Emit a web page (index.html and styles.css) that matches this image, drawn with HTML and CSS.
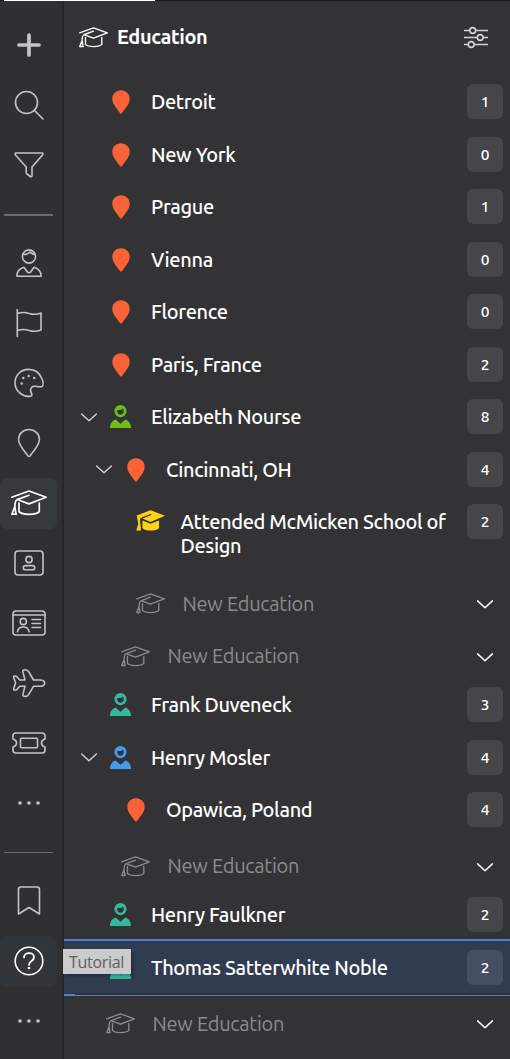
FILE: index.html
```html
<!DOCTYPE html>
<html lang="en">
<head>
<meta charset="utf-8">
<title>Education</title>
<link rel="stylesheet" href="styles.css">
</head>
<body>
<svg class="defs" aria-hidden="true">
  <symbol id="cap" viewBox="0 0 36 26"><path d="M.8 7.2 18 1l17.2 6.2L18 13.9 7.6 10M18 5.2 6.1 9.6Q3.9 11 3.8 17M8 13v8.6c3 3.6 17.2 3.6 20.3 0V13M3.8 16.8.9 24.2h4.2Z"/></symbol>
  <symbol id="cap-fill" viewBox="0 0 36 26"><path class="solid" d="M0 7.2 18 .3l18 6.9-18 7.6Z"/><path class="solid" d="m8 13 10 4 10.600-4v9.200c-3 4.400-17.500 4.400-20.600 0Z"/><path class="solid" d="M1 8h5.500c-2 3-1.600 5.500-1.100 8l.8 9.500H.3L2.900 17Z"/><path class="cut" d="M18.500 5.600 8 9.700Q6.300 11 6.300 15"/></symbol>
  <symbol id="pin-fill" viewBox="0 0 18 24"><path class="solid" d="M9 .3C4 .3.3 4 .3 8.700.3 14 5 18.800 8 23q1 1.300 2 0c3-4.200 7.700-9 7.700-14.300C17.700 4 14 .3 9 .3Z"/></symbol>
  <symbol id="person-fill" viewBox="0 0 21 23"><path class="solid" fill-rule="evenodd" d="M10.500 0a6.100 6.100 0 1 0 0 12.200 6.100 6.100 0 0 0 0-12.200Zm2.400 3.500.6 1c.8 2.900-.6 5.200-3 5.200-2.500 0-3.900-2.400-3-4.900 2.300.6 3.900.2 5.400-1.300Z"/><path class="solid" d="M0 23c0-4.800 2.200-7.300 5.700-8.500l4.800 4.300 4.800-4.300C18.800 15.700 21 18.200 21 23Z"/></symbol>
  <symbol id="down" viewBox="0 0 16 9"><path d="m.6.9 7.400 6.800L15.400.9"/></symbol>
</svg>
<div class="top-strip"><div class="top-progress"></div></div>
<div class="app">
  <nav class="rail">
    <div class="tools">
      <span class="tool"><svg class="plus" width="24" height="24"><path d="M12 2v20M2 12h20"/></svg></span>
      <span class="tool"><svg width="30" height="30"><circle cx="12.500" cy="12.500" r="11"/><path d="m20.500 20.500 8.500 8.500"/></svg></span>
      <span class="tool"><svg width="30" height="28"><path d="M1.500 2h27q.8 1-.2 2.200L18 16v8.500q0 1.800-1.700 1L13 23q-.8-.5-.8-1.500V16L1.700 4.200Q.7 2.800 1.500 2Z"/></svg></span>
    </div>
    <hr class="rule thick">
    <div class="tools kinds">
      <span class="tool"><svg width="26" height="30"><circle cx="13" cy="8.500" r="6.600"/><path d="M7 6q3.500 1.500 7-1.800Q16.500 6.500 19 6.500M.9 28.200c0-5.300 2.800-7.700 7-8.900l3.300 4.500q1.800 1.600 3.600 0l3.300-4.500c4.200 1.200 7 3.600 7 8.900Z"/></svg></span>
      <span class="tool"><svg width="26" height="28"><path d="M1.300 0v28M1.300 4.500c5-1.500 7.500-1.500 12 0 4 1.200 7.500 1.300 11.700-.6v17c-4.200 1.900-7.700 1.800-11.700.6-4.500-1.500-7-1.500-12 0"/></svg></span>
      <span class="tool"><svg width="30" height="30"><path d="M17.800 19.200c2.200-2.500 7.200.5 10.300-.8 1.200-1.200 1-4.900 0-7.400C25.800 5.200 20.800 1.400 14.500 1.400A13.300 13.300 0 0 0 1 14.800c0 8 7.200 14.600 15.600 13.400 1.500-.3 1.700-1.700.8-3.200-1-1.800-1.200-4 .4-5.800Z"/><g class="dots"><circle cx="7.700" cy="15.400" r="1.250"/><circle cx="9.300" cy="9.900" r="1.250"/><circle cx="14.700" cy="8" r="1.250"/><circle cx="20.200" cy="9.900" r="1.250"/></g></svg></span>
      <span class="tool"><svg width="24" height="30"><path d="M12 1.500C6.200 1.500 1.600 5.700 1.600 11.300 1.600 17.500 7.500 23 11 28q1 1 2 0c3.500-5 9.400-10.500 9.400-16.700 0-5.600-4.600-9.800-10.400-9.800Z"/></svg></span>
      <span class="tool active"><svg width="36" height="26"><use href="#cap"/></svg></span>
      <span class="tool"><svg width="30" height="26"><rect x="1" y="1" width="28" height="24" rx="3"/><circle cx="15" cy="9.500" r="3.100"/><rect x="9.300" y="15.600" width="11.400" height="4.200" rx="2.100"/></svg></span>
      <span class="tool"><svg width="34" height="26"><rect x="1" y="1" width="32" height="24" rx="3"/><path d="M1 5h32M5.500 21.800q.8-4.800 5.800-4.800t5.800 4.800M20 9.500h8.500M20 13.500h8.500M20 17.500h8.500"/><circle cx="11.300" cy="11.500" r="3.100"/></svg></span>
      <span class="tool"><svg width="34" height="30"><path d="M28.700 12c5.300.8 5.300 5.500 0 6.300H21.500l-4.600 7.800q-1.400 2.300-3.200 2.300c-2.800 0-3.300-.8-2.700-2.500l2-7.600H7.700l-3 3.500q-3.500 1.200-3-1.200l1.900-5.500-1.900-5.500q-.5-2.400 3-1.200l3 3.600H13l-2-7.600C10.400 2.600 11 1.700 13.700 1.700q1.800 0 3.200 2.300l4.600 8Z"/></svg></span>
      <span class="tool"><svg width="34" height="24"><path d="M4 2h26q3 0 3 3v3q-3.500 1-3.500 4t3.500 4v3q0 3-3 3H4q-3 0-3-3v-3q3.500-1 3.500-4T1 8V5q0-3 3-3Z"/><rect x="8.500" y="7.300" width="17" height="9.500" rx="1"/></svg></span>
      <span class="tool"><svg width="24" height="6"><g class="dots"><circle cx="3" cy="3" r="1.800"/><circle cx="12" cy="3" r="1.800"/><circle cx="21" cy="3" r="1.800"/></g></svg></span>
    </div>
    <hr class="rule">
    <div class="tools foot">
      <span class="tool"><svg width="24" height="30"><path d="M1.500 28V3.500Q1.500 1 4 1h16q2.500 0 2.500 2.500V28L12 21.500Z"/></svg></span>
      <span class="tool hover"><svg width="30" height="30"><circle cx="15" cy="15" r="13.800"/><path class="question" d="M10 11.300c.2-5.600 10-5.400 10 0 0 4-5 3.500-5 7.500"/><circle class="solid" cx="15" cy="22" r="1.300"/></svg></span>
      <span class="tool"><svg width="24" height="6"><g class="dots"><circle cx="3" cy="3" r="1.800"/><circle cx="12" cy="3" r="1.800"/><circle cx="21" cy="3" r="1.800"/></g></svg></span>
    </div>
    <div class="tooltip">Tutorial</div>
  </nav>
  <main class="panel">
    <header class="head"><svg class="cap"><use href="#cap"/></svg><h1>Education</h1><svg class="sliders" width="24" height="24"><path d="M.5 5.500h5M12 5.500h11.500M.5 12.500h12.500M19.500 12.500h4M.5 19.500h3.500M10.500 19.500h13"/><circle cx="8.700" cy="5.500" r="2.900"/><circle cx="16.200" cy="12.500" r="2.900"/><circle cx="7.200" cy="19.500" r="2.900"/></svg></header>
    <div class="row"><i class="chev"></i><svg class="icon pin"><use href="#pin-fill"/></svg><span class="label">Detroit</span><b class="badge">1</b></div>
    <div class="row"><i class="chev"></i><svg class="icon pin"><use href="#pin-fill"/></svg><span class="label">New York</span><b class="badge">0</b></div>
    <div class="row"><i class="chev"></i><svg class="icon pin"><use href="#pin-fill"/></svg><span class="label">Prague</span><b class="badge">1</b></div>
    <div class="row"><i class="chev"></i><svg class="icon pin"><use href="#pin-fill"/></svg><span class="label">Vienna</span><b class="badge">0</b></div>
    <div class="row"><i class="chev"></i><svg class="icon pin"><use href="#pin-fill"/></svg><span class="label">Florence</span><b class="badge">0</b></div>
    <div class="row"><i class="chev"></i><svg class="icon pin"><use href="#pin-fill"/></svg><span class="label">Paris, France</span><b class="badge">2</b></div>
    <div class="row"><svg class="chev"><use href="#down"/></svg><svg class="icon person green"><use href="#person-fill"/></svg><span class="label">Elizabeth Nourse</span><b class="badge">8</b></div>
    <div class="row level1"><svg class="chev"><use href="#down"/></svg><svg class="icon pin"><use href="#pin-fill"/></svg><span class="label">Cincinnati, OH</span><b class="badge">4</b></div>
    <div class="row level2 tall"><i class="chev"></i><svg class="icon cap yellow"><use href="#cap-fill"/></svg><span class="label">Attended McMicken School of<br>Design</span><b class="badge">2</b></div>
    <div class="row level2 new"><i class="chev"></i><svg class="icon cap"><use href="#cap"/></svg><span class="label">New Education</span><svg class="chev"><use href="#down"/></svg></div>
    <div class="row level1 new"><i class="chev"></i><svg class="icon cap"><use href="#cap"/></svg><span class="label">New Education</span><svg class="chev"><use href="#down"/></svg></div>
    <div class="row"><i class="chev"></i><svg class="icon person teal"><use href="#person-fill"/></svg><span class="label">Frank Duveneck</span><b class="badge">3</b></div>
    <div class="row"><svg class="chev"><use href="#down"/></svg><svg class="icon person blue"><use href="#person-fill"/></svg><span class="label">Henry Mosler</span><b class="badge">4</b></div>
    <div class="row level1"><i class="chev"></i><svg class="icon pin"><use href="#pin-fill"/></svg><span class="label">Opawica, Poland</span><b class="badge">4</b></div>
    <div class="row level1 new"><i class="chev"></i><svg class="icon cap"><use href="#cap"/></svg><span class="label">New Education</span><svg class="chev"><use href="#down"/></svg></div>
    <div class="row"><i class="chev"></i><svg class="icon person teal"><use href="#person-fill"/></svg><span class="label">Henry Faulkner</span><b class="badge">2</b></div>
    <div class="row selected"><i class="chev"></i><svg class="icon person teal"><use href="#person-fill"/></svg><span class="label">Thomas Satterwhite Noble</span><b class="badge">2</b></div>
    <div class="row new"><i class="chev"></i><svg class="icon cap"><use href="#cap"/></svg><span class="label">New Education</span><svg class="chev"><use href="#down"/></svg></div>
  </main>
</div>
</body>
</html>
```
FILE: styles.css
```css
*, *::before, *::after { box-sizing: border-box; }
body { margin: 0; height: 1059px; overflow: hidden; background: #333335; color: #fff; font-family: Ubuntu, "Noto Sans", sans-serif; }
svg { display: block; flex: none; fill: none; stroke: currentColor; stroke-width: 1.6; stroke-linecap: round; stroke-linejoin: round; }
.defs { position: absolute; width: 0; height: 0; }
.solid, .dots { fill: currentColor; stroke: none; }
.cut { stroke: #333335; stroke-width: 1.5; }
.top-strip { height: 1px; background: #19191b; }
.top-progress { width: 151px; height: 1px; margin-left: 4px; background: #fff; }
.app { display: flex; height: 1058px; }
.rail { position: relative; flex: none; width: 64px; padding-top: 19px; background: #303032; border-right: 2px solid #262628; color: #c4c4c6; }
.tools { display: flex; flex-direction: column; gap: 9px; width: 57px; }
.tool { display: flex; align-items: center; justify-content: center; height: 51px; padding-bottom: 1px; border-radius: 7px; }
.plus { stroke-width: 3.7; }
.active { background: #373a3d; color: #fff; }
.active svg { stroke-width: 1.7; }
.hover { background: #32363b; color: #fff; }
.question { stroke-width: 1.9; }
.rule { width: 49px; height: 1px; margin: 23px 0 0 4px; border: 0; background: #6b6b6d; }
.rule.thick { height: 2px; }
.kinds { padding-top: 22px; }
.foot { padding-top: 23px; }
.tooltip { position: absolute; z-index: 2; left: 63px; top: 948px; width: 68px; height: 25px; padding-left: 6px; background: #cbcbcb; box-shadow: 2px 2px 3px #0004; color: #606060; font: 16px/27px "Open Sans", sans-serif; letter-spacing: -.3px; }
.panel { flex: 1; min-width: 0; }
.head { display: flex; align-items: center; height: 74.75px; padding: 0 22px 2px 15px; }
.head h1 { flex: 1; margin: 0 0 0 9px; font-size: 20px; line-height: 26px; letter-spacing: -.35px; }
.cap { width: 29px; height: 21px; stroke-width: 1.65; }
.head > .cap { stroke-width: 1.7; }
.sliders { color: #d2d2d4; }
.row { display: flex; align-items: center; height: 52.5px; padding: 0 7px 0 17px; }
.level1 { padding-left: 32px; }
.level2 { padding-left: 47px; }
.chev { width: 16px; height: 9px; flex: none; color: #d4d4d6; stroke-width: 1.4; }
.icon.pin { width: 18px; height: 24px; margin: 0 6px 0 14.5px; color: #fa6338; }
.icon.person { width: 21px; height: 23px; margin: 0 4.5px .5px 13px; }
.icon.cap { margin: 0 1px 0 8.5px; }
.green { color: #6dbf18; }
.teal { color: #35b99e; }
.blue { color: #459cee; }
.yellow { color: #fbd515; }
.label { flex: 1; margin-left: 15.5px; font-size: 20px; line-height: 24px; font-weight: 500; white-space: nowrap; letter-spacing: -.35px; }
.badge { display: flex; align-items: center; justify-content: center; width: 36px; height: 35px; margin-bottom: .5px; flex: none; border-radius: 6px; background: #464648; font-size: 15.5px; font-weight: 500; }
.tall { height: 78px; align-items: flex-start; padding-top: 8.5px; }
.tall .label { margin-left: 15px; padding-top: 5.25px; }
.tall .icon { margin-top: 6px; }
.new { padding-top: 7.5px; padding-right: 17.5px; color: #8b8b8d; }
.new .label { margin-left: 17px; font-weight: 400; letter-spacing: -.25px; }
.new .chev { color: #fff; stroke-width: 1.5; }
.new svg.chev { margin-top: 1.5px; }
.selected { position: relative; height: 52px; margin-bottom: .5px; background: #303c50; }
.selected .label { padding-top: 1px; }
.selected::before { content: ""; position: absolute; left: 0; right: 0; top: -2px; height: 57px; border-top: 2px solid #4c84d0; border-bottom: 1px solid #4c84d0; }
.selected::after { content: ""; position: absolute; left: 0; bottom: -3px; width: 11px; height: 2px; background: #4c84d0; }
.selected .badge { background: #444f63; }
```
